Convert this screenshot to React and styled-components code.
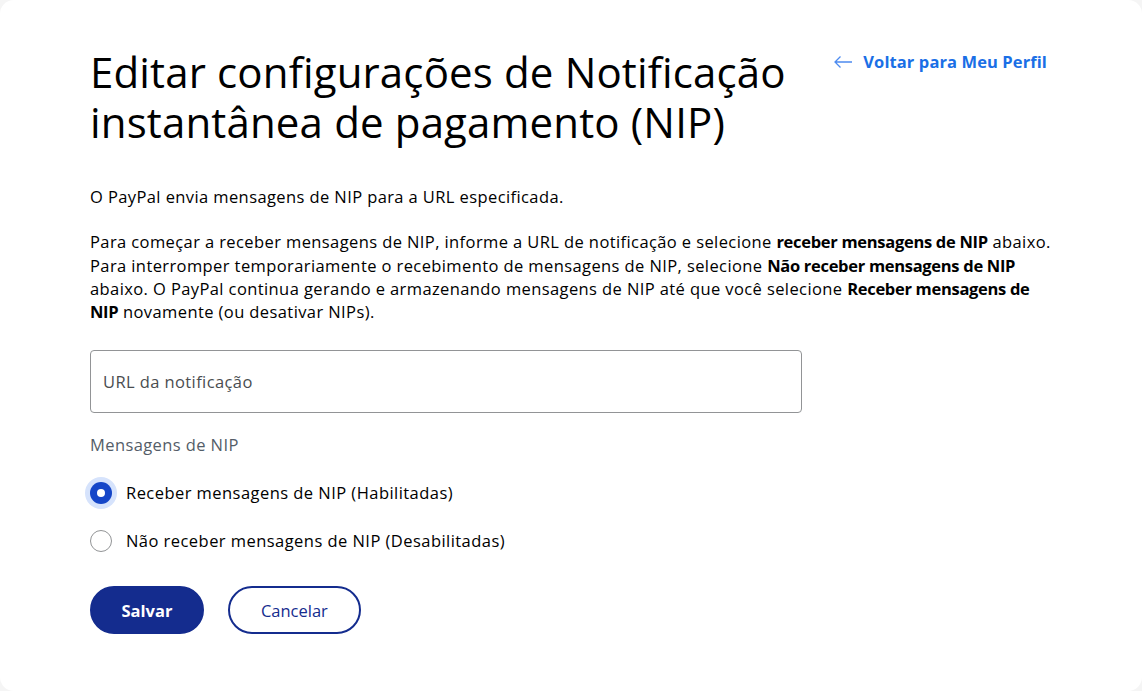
import React, { useState } from 'react';
import styled, { createGlobalStyle } from 'styled-components';

const GlobalStyle = createGlobalStyle`
  html, body {
    margin: 0;
    padding: 0;
    background: #f5f5f5;
  }
  body {
    font-family: 'Open Sans', 'Liberation Sans', sans-serif;
    color: #001435;
  }
  * { box-sizing: border-box; }
`;

const Card = styled.div`
  width: 1142px;
  height: 691px;
  background: #ffffff;
  border-radius: 14px;
  padding: 47px 95px 0 90px;
  overflow: hidden;
`;

const Header = styled.header`
  display: flex;
  justify-content: space-between;
  align-items: flex-start;
`;

const Title = styled.h1`
  margin: 0;
  width: 720px;
  font-size: 42px;
  font-weight: 400;
  line-height: 50px;
  color: #000000;
  letter-spacing: 0.15px;
`;

const BackLink = styled.a`
  display: flex;
  align-items: center;
  gap: 10px;
  margin-top: 3px;
  font-size: 16.5px;
  font-weight: 700;
  letter-spacing: 0.1px;
  color: #1a6fe6;
  text-decoration: none;
  cursor: pointer;
`;

const Para = styled.p`
  margin: ${(p) => p.$top || 0}px 0 0;
  width: 980px;
  font-size: 16.5px;
  letter-spacing: 0.4px;
  line-height: 23.3px;
  color: #000000;

  b { font-weight: 700; letter-spacing: -0.3px; }
`;

const Field = styled.label`
  display: flex;
  align-items: center;
  margin-top: 27px;
  width: 712px;
  height: 63px;
  padding: 0 12px;
  border: 1px solid #929496;
  border-radius: 4px;
  font-size: 16.5px;
  letter-spacing: 0.4px;
  color: #4a4d50;
`;

const GroupLabel = styled.div`
  margin-top: 20px;
  font-size: 16.5px;
  letter-spacing: 0.4px;
  line-height: 23px;
  color: #545d68;
`;

const Options = styled.div`
  display: flex;
  flex-direction: column;
  gap: 24px;
  margin-top: 25px;
`;

const Option = styled.label`
  display: flex;
  align-items: center;
  gap: 14px;
  height: 24px;
  line-height: 24px;
  font-size: 16.5px;
  letter-spacing: 0.45px;
  color: #000000;
  cursor: pointer;
`;

const Radio = styled.span`
  position: relative;
  width: 22px;
  height: 22px;
  border-radius: 50%;
  flex-shrink: 0;
  background: ${(p) => (p.$checked ? '#1546c8' : '#ffffff')};
  border: ${(p) => (p.$checked ? 'none' : '1px solid #929496')};
  box-shadow: ${(p) => (p.$checked ? '0 0 0 5px #d6e3fc' : 'none')};

  &::after {
    content: '';
    display: ${(p) => (p.$checked ? 'block' : 'none')};
    position: absolute;
    left: 7px;
    top: 7px;
    width: 8px;
    height: 8px;
    border-radius: 50%;
    background: #ffffff;
  }
`;

const Actions = styled.div`
  display: flex;
  gap: 24px;
  margin-top: 33px;
`;

const Button = styled.button`
  height: 48px;
  padding: 0 ${(p) => (p.$primary ? 29.5 : 31)}px;
  border-radius: 24px;
  font-family: inherit;
  font-size: 16.5px;
  font-weight: ${(p) => (p.$primary ? 700 : 500)};
  border: 2px solid #142c8e;
  background: ${(p) => (p.$primary ? '#142c8e' : '#ffffff')};
  color: ${(p) => (p.$primary ? '#ffffff' : '#142c8e')};
  cursor: pointer;
`;

const ArrowIcon = () => (
  <svg width="20" height="14" viewBox="0 0 20 14" fill="none">
    <path d="M19 7H2M7.5 1.5L2 7l5.5 5.5" stroke="#4d8bf0" strokeWidth="1.3" />
  </svg>
);

export default function App() {
  const [enabled, setEnabled] = useState(true);
  return (
    <>
      <GlobalStyle />
      <Card>
        <Header>
          <Title>Editar configurações de Notificação instantânea de pagamento (NIP)</Title>
          <BackLink>
            <ArrowIcon />
            Voltar para Meu Perfil
          </BackLink>
        </Header>
        <Para $top={38}>O PayPal envia mensagens de NIP para a URL especificada.</Para>
        <Para $top={22}>
          Para começar a receber mensagens de NIP, informe a URL de notificação e selecione <b>receber mensagens de NIP</b> abaixo.
          <br />
          Para interromper temporariamente o recebimento de mensagens de NIP, selecione <b>Não receber mensagens de NIP</b>
          <br />
          abaixo. O PayPal continua gerando e armazenando mensagens de NIP até que você selecione <b>Receber mensagens de</b>
          <br />
          <b>NIP</b> novamente (ou desativar NIPs).
        </Para>
        <Field>URL da notificação</Field>
        <GroupLabel>Mensagens de NIP</GroupLabel>
        <Options>
          <Option onClick={() => setEnabled(true)}>
            <Radio $checked={enabled} />
            Receber mensagens de NIP (Habilitadas)
          </Option>
          <Option onClick={() => setEnabled(false)}>
            <Radio $checked={!enabled} />
            Não receber mensagens de NIP (Desabilitadas)
          </Option>
        </Options>
        <Actions>
          <Button $primary>Salvar</Button>
          <Button>Cancelar</Button>
        </Actions>
      </Card>
    </>
  );
}
